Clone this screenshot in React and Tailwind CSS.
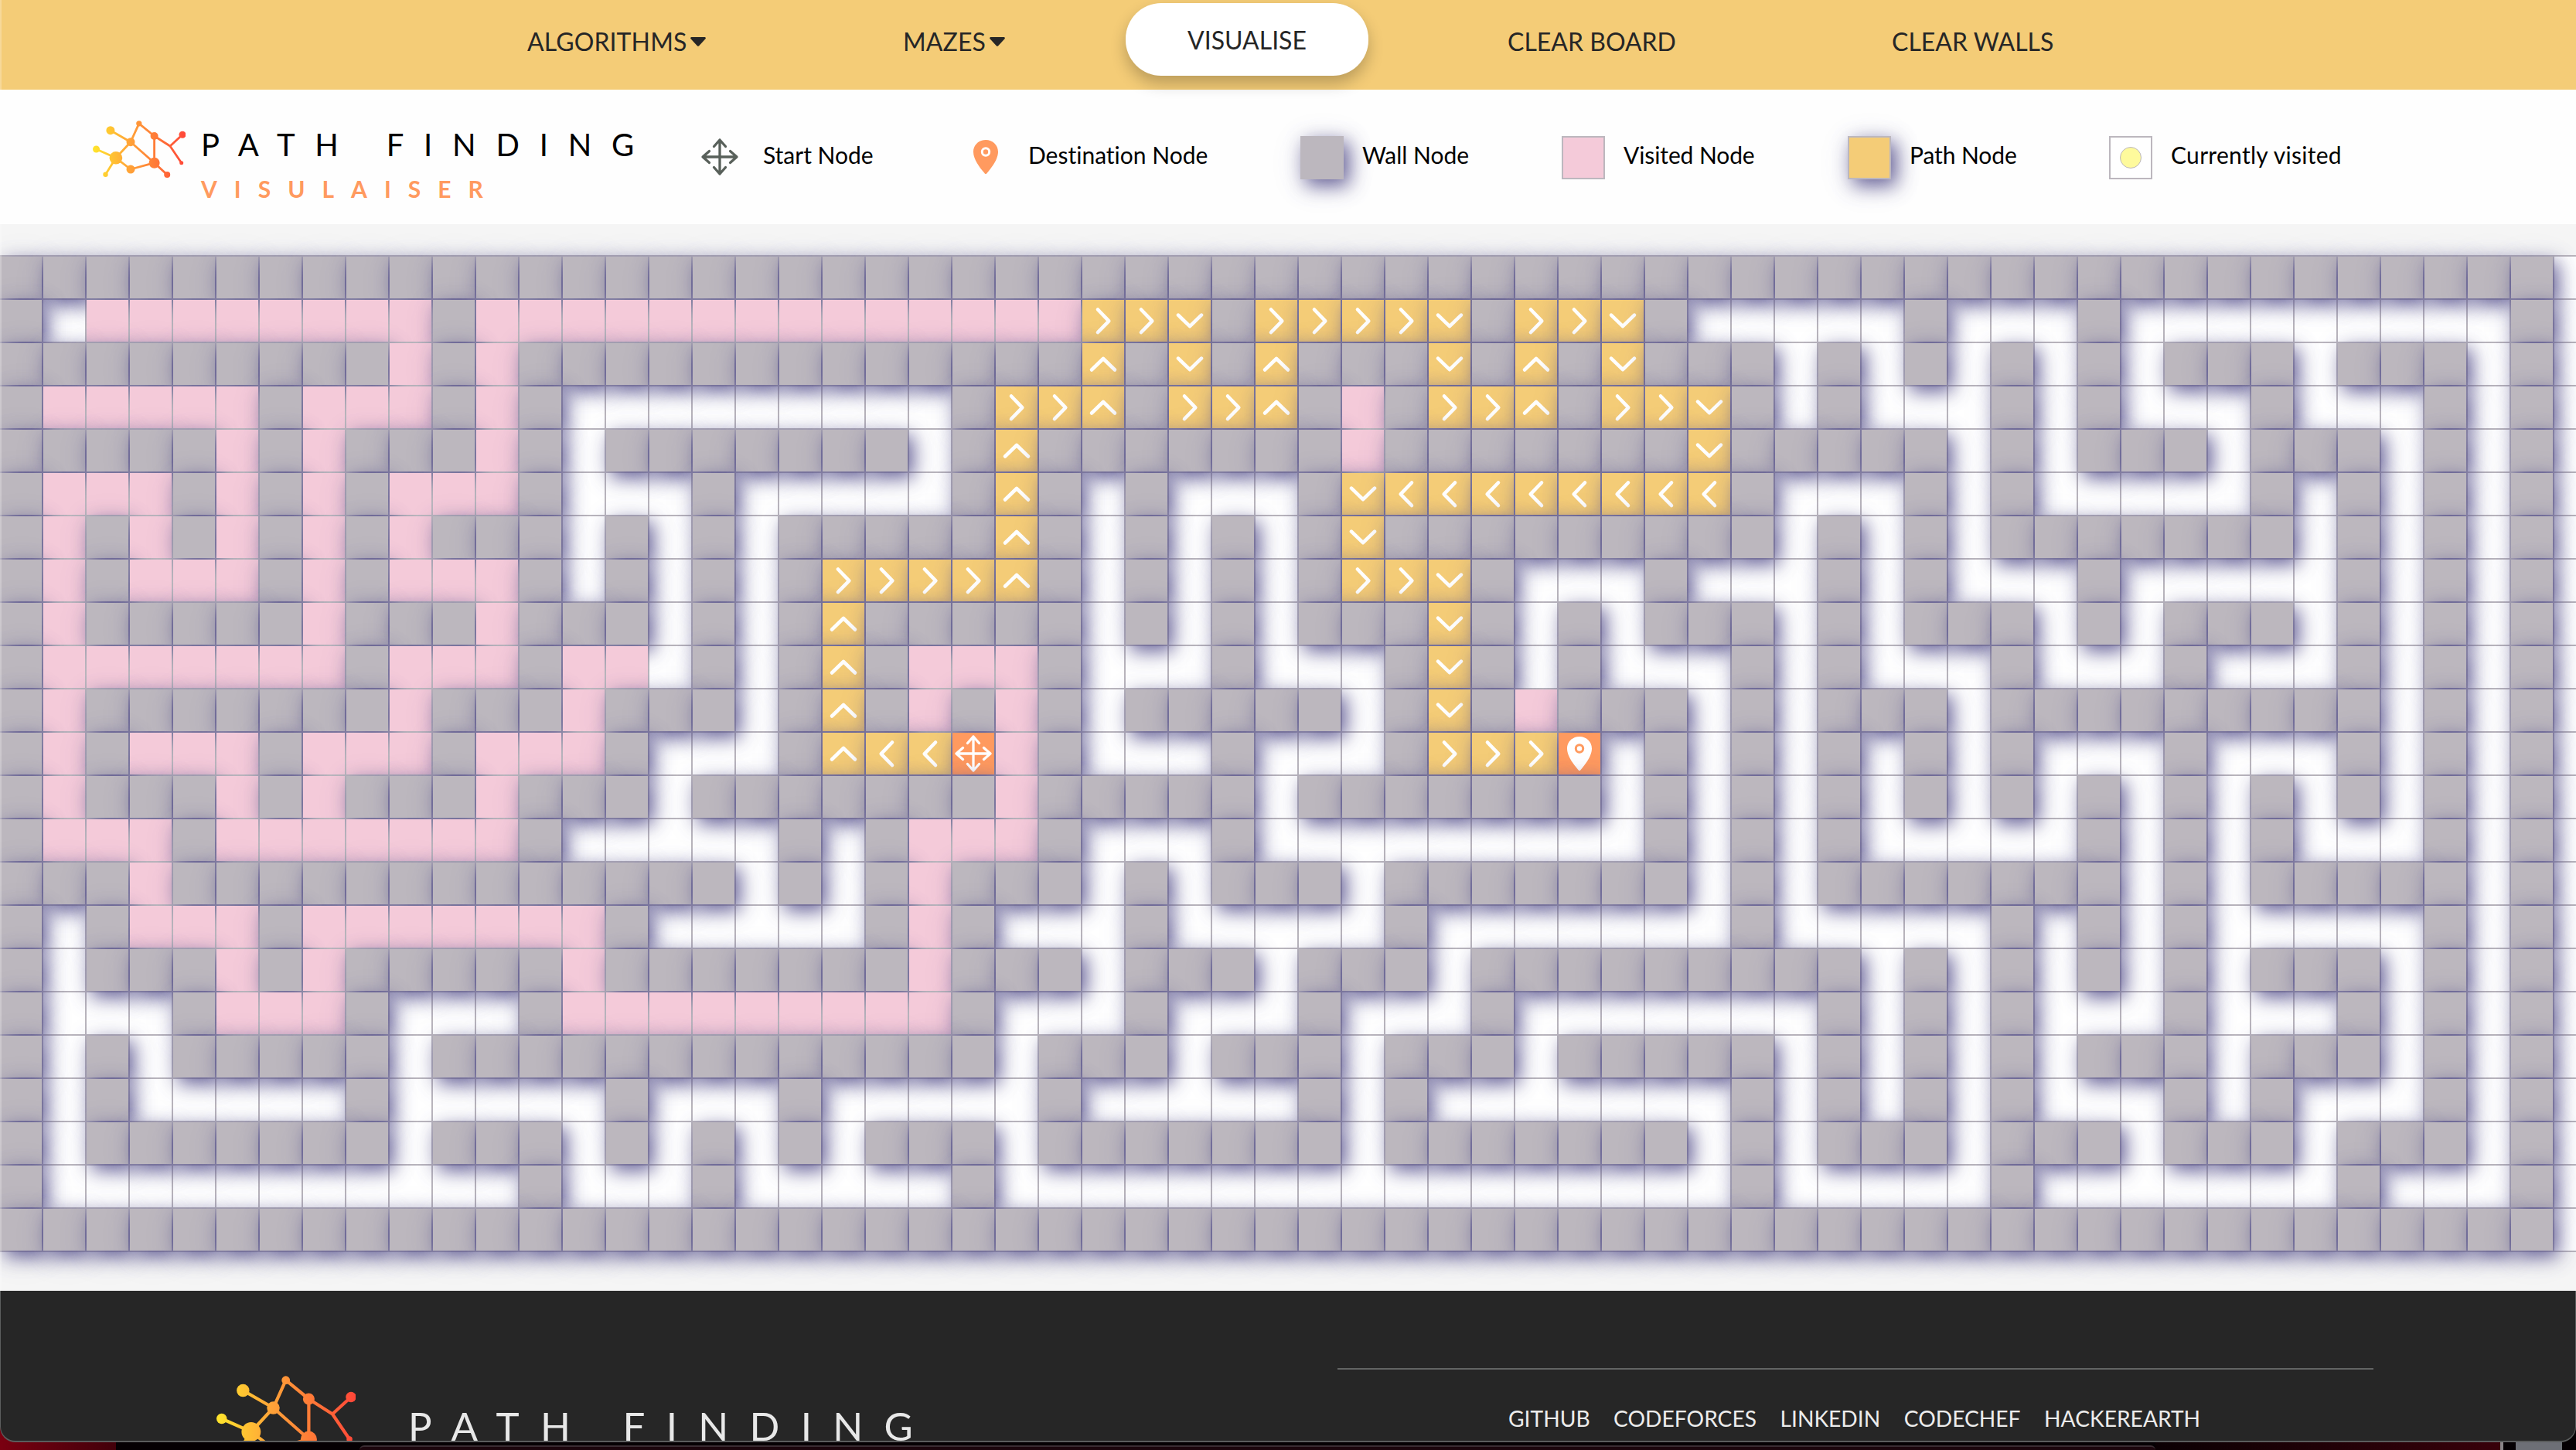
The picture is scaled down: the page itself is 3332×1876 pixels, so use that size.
import React from "react";

const MAZE = [
  "###########################################################",
  "#.oooooooo#oooooooooooooo>>v#>>>>v#>>v#.....#...#.........#",
  "#########o#o#############^#v#^###v#^#v###.#.#.#.#.###.###.#",
  "#ooooo#ooo#o#.........#>>^#>>^#o#>>^#>>v#.#...#.#...#...#.#",
  "#####o#o###o#.#######.#^#######o#######v#####.#.###.###.#.#",
  "#ooo#o#o#ooo#...#.....#^#.#...#v<<<<<<<<#...#.#.....#.#.#.#",
  "#o#o#o#o#o###.#.#.#####^#.#.#.#v#########.#.#.#######.#.#.#",
  "#o#ooo#o#ooo#.#.#.#>>>>^#.#.#.#>>v#...#...#.#...#.....#.#.#",
  "#o#####o###o###.#.#^#####.#.#.###v#.#.###.#.###.#.###.#.#.#",
  "#ooooooo#ooo#oo.#.#^#ooo#...#...#v#.#...#.#...#...#...#.#.#",
  "#o#######o###o###.#^#o#o#.#####.#v#o###.#.###.#########.#.#",
  "#o#ooo#ooo#ooo#...#^<<So#...#...#>>>D.#.#.#.#.#...#...#.#.#",
  "#o###o#o###o###.#######o#####.#######.#.#.#.#.#.#.#.#.#.#.#",
  "#ooo#ooooooo#.....#.#ooo#...#.........#.#.#.....#.#.#...#.#",
  "###o#############.#.#o###.#.###.#######.#.#######.#.#####.#",
  "#.#ooo#ooooooo#.....#o#...#.....#.......#.....#.#.#.....#.#",
  "#.###o#o#####o#######o###.###.###.#########.#.#.#.#.###.#.#",
  "#...#ooo#...#ooooooooo#...#...#...#.......#.#.#...#...#.#.#",
  "#.#.#####.#############.###.###.###.#####.#.#.#.###.###.#.#",
  "#.#.....#.....#...#.....#.....#.#.......#.#.#.#...#.#...#.#",
  "#.#######.###.#.#.#.###.#######.#######.#.###.###.###.###.#",
  "#...........#...#.....#.................#.....#.......#...#",
  "###########################################################",
];

const SHADOW = "shadow-[7px_8px_24px_#5a558fe8,2px_7px_40px_#5a558f26]";

const CHEVRONS = {
  ">": "M20 12.5 34.3 27.3 20 42",
  "<": "M34 12.5 19.7 27.3 34 42",
  "^": "M12 34.5 27 20 42 34.5",
  v: "M12 19.7 27 34.2 42 19.7",
};

function MoveIcon({ className }) {
  return (
    <svg viewBox="0 0 54 54" className={className} fill="none" stroke="currentColor" strokeWidth="3.3" strokeLinecap="round" strokeLinejoin="round">
      <path d="M27 5v44M5 27h44M19.5 13.500 27 5l7.5 8.500M19.5 40.500 27 49l7.5-8.500M13.500 19.5 5 27l8.500 7.5M40.500 19.5 49 27l-8.500 7.5" />
    </svg>
  );
}

function PinIcon({ className, hole }) {
  return (
    <svg viewBox="0 0 54 54" className={className}>
      <path fill="currentColor" d="M27 5c-9 0-16 6.8-16 15.4C11 31.500 22.500 44.500 25.800 48.400a1.600 1.600 0 0 0 2.400 0C31.500 44.500 43 31.500 43 20.400 43 11.800 36 5 27 5Z" />
      <circle cx="27" cy="20.500" r="4.700" fill="none" stroke={hole} strokeWidth="3" />
    </svg>
  );
}

function Cell({ type }) {
  if (type === ".") return <div />;
  if (type === "#") return <div className={`bg-[#bcb7be] ${SHADOW}`} />;
  if (type === "o") return <div className="bg-[#f4cad9]" />;
  if (type === "S")
    return (
      <div className={`bg-[#ff9a5f] text-white ${SHADOW}`}>
        <MoveIcon className="size-[54px]" />
      </div>
    );
  if (type === "D")
    return (
      <div className={`bg-[#ff9a5f] text-white ${SHADOW}`}>
        <PinIcon className="size-[54px]" hole="#ff9a5f" />
      </div>
    );
  return (
    <div className={`bg-[#f4cc77] text-white ${SHADOW}`}>
      <svg viewBox="0 0 54 54" className="size-[54px]" fill="none" stroke="currentColor" strokeWidth="4.6" strokeLinecap="round" strokeLinejoin="round">
        <path d={CHEVRONS[type]} />
      </svg>
    </div>
  );
}

function Logo({ className, id }) {
  const nodes = [
    [59.8, 3.8, 3.6], [22.900, 12.700, 5.500], [49, 27.700, 5.500], [79.600, 20, 5], [116, 18.300, 4.500],
    [114.700, 54.700, 2.500], [4.500, 37, 4.500], [29.900, 48.300, 8.300], [16.500, 69.700, 3.200], [49, 63, 5.500],
    [79.600, 54.700, 7], [96.200, 70, 4],
  ];
  return (
    <svg viewBox="0 0 120 74" className={className}>
      <defs>
        <linearGradient id={id} gradientUnits="userSpaceOnUse" x1="0" y1="0" x2="120" y2="0">
          <stop offset="0" stopColor="#ffe52c" />
          <stop offset="0.4" stopColor="#ffa238" />
          <stop offset="0.660" stopColor="#ff7d37" />
          <stop offset="1" stopColor="#ff4638" />
        </linearGradient>
      </defs>
      <g fill="none" stroke={`url(#${id})`} strokeWidth="2.800">
        <path d="M22.900 12.700 49 27.700M59.800 3.800 49 27.700M59.800 3.800 79.600 20M49 27.700 29.900 48.300M4.500 37 29.900 48.300M29.900 48.300 16.500 69.700M29.900 48.300 49 63M49 63 79.600 54.700M49 27.700 79.600 54.700M79.600 20 79.601 54.700M79.600 20 100 33M100 33 116 18.300M100 33 114.700 54.700M79.600 54.700 96.200 70" />
      </g>
      <g fill={`url(#${id})`}>
        {nodes.map(([x, y, r]) => (
          <circle key={`${x}-${y}`} cx={x} cy={y} r={r} />
        ))}
      </g>
    </svg>
  );
}

function Caret() {
  return (
    <svg viewBox="0 0 22 14" className="ml-[4px] h-[14px] w-[22px]">
      <path d="M2.500 1h17a1.300 1.300 0 0 1 1 2.200l-8.300 9a1.700 1.700 0 0 1-2.400 0l-8.300-9a1.300 1.300 0 0 1 1-2.200Z" fill="#262626" />
    </svg>
  );
}

function NavBar() {
  return (
    <nav className="flex h-[116px] items-center bg-[#f4cc77] pl-[682px] text-[32px] leading-none text-[#262626]">
      <div className="flex w-[486px] items-center pb-[8px] tracking-[0.100px]">ALGORITHMS<Caret /></div>
      <div className="flex w-[288px] items-center pb-[8px] tracking-[0.100px]">MAZES<Caret /></div>
      <button className="mb-[14px] h-[94px] w-[314px] rounded-[46px] bg-white pt-[2px] leading-none shadow-[0_10px_20px_rgba(0,0,0,0.24)]">
        VISUALISE
      </button>
      <div className="ml-[180px] w-[497px] pb-[8px]">CLEAR BOARD</div>
      <div className="pb-[8px]">CLEAR WALLS</div>
    </nav>
  );
}

function Swatch({ className, children }) {
  return <div className={`mt-[2px] flex size-[56px] items-center justify-center border-2 border-[#bcb7be] ${className}`}>{children}</div>;
}

function Legend() {
  return (
    <div className="flex h-[174px] items-start bg-[#fefefe] text-black">
      <div className="flex w-[904px] items-start pt-[40px] pl-[120px]">
        <Logo className="h-[74px] w-[120px] shrink-0" id="logo-top" />
        <div className="ml-[20px] whitespace-nowrap">
          <div className="pt-[11px] text-[40px] leading-[40px] tracking-[25.800px]">PATH FINDING</div>
          <div className="mt-[21px] text-[30px] leading-[32px] font-bold tracking-[22px] text-[#ff9a5f]">VISULAISER</div>
        </div>
      </div>
      <div className="flex items-center pt-[58px] text-[30px] leading-none whitespace-nowrap">
        <div className="flex w-[344px] items-center">
          <MoveIcon className="size-[54px] text-[#58605a]" />
          <span className="ml-[29px] pb-[6px]">Start Node</span>
        </div>
        <div className="flex w-[434px] items-center">
          <PinIcon className="size-[54px] text-[#ff9a5f]" hole="#fff" />
          <span className="ml-[28px] pb-[6px] [font-variant-ligatures:none]">Destination Node</span>
        </div>
        <div className="flex w-[338px] items-center">
          <Swatch className={`bg-[#bcb7be] ${SHADOW}`} />
          <span className="ml-[24px] pb-[6px]">Wall Node</span>
        </div>
        <div className="flex w-[370px] items-center">
          <Swatch className="bg-[#f4cad9]" />
          <span className="ml-[24px] pb-[6px] tracking-[-0.100px]">Visited Node</span>
        </div>
        <div className="flex w-[338px] items-center">
          <Swatch className={`bg-[#f4cc77] ${SHADOW}`} />
          <span className="ml-[24px] pb-[6px] tracking-[-0.100px]">Path Node</span>
        </div>
        <div className="flex items-center">
          <Swatch className="bg-white">
            <div className="mb-[1px] size-[28px] rounded-full border border-[#bcb7be] bg-[#fefa9c]" />
          </Swatch>
          <span className="ml-[24px] pb-[6px] tracking-[0.300px]">Currently visited</span>
        </div>
      </div>
    </div>
  );
}

function Board() {
  return (
    <div className="bg-[#f5f5f5] pt-[40px] pb-[50px]">
      <div className="grid w-[3332px] grid-cols-[repeat(59,54px)] grid-rows-[repeat(23,54px)] gap-[2px] bg-white bg-[repeating-linear-gradient(90deg,transparent_0_54px,#bab6bd_54px_56px),repeating-linear-gradient(180deg,#bab6bd_0_2px,transparent_2px_56px)] py-[2px]">
        {MAZE.flatMap((row, r) => row.split("").map((type, c) => <Cell key={`${r}-${c}`} type={type} />))}
      </div>
    </div>
  );
}

const LINKS = ["GITHUB", "CODEFORCES", "LINKEDIN", "CODECHEF", "HACKEREARTH"];

function Footer() {
  return (
    <footer className="relative z-10 flex h-[196px] items-start rounded-b-[20px] border-x border-b-2 border-[#5b5d5d] bg-[#262626]">
      <div className="flex w-[1729px] items-start pt-[110px] pl-[279px] text-[#e8e8e8]">
        <div className="h-[84px] w-[180px] shrink-0 overflow-hidden">
          <Logo className="h-[111px] w-[180px]" id="logo-bottom" />
        </div>
        <div className="ml-[68px] pt-[45px] text-[51px] leading-[40px] tracking-[27.300px] whitespace-nowrap">PATH FINDING</div>
      </div>
      <div className="w-[1340px] pt-[100px]">
        <div className="h-[2px] bg-[#626463]" />
        <div className="flex gap-[30.500px] pt-[48px] pl-[221px] text-[28.200px] leading-[30px] text-[#ececec]">
          {LINKS.map((name) => (
            <span key={name}>{name}</span>
          ))}
        </div>
      </div>
    </footer>
  );
}

function Desktop() {
  return (
    <div className="-mt-[20px] flex h-[30px] items-end bg-[#050003]">
      <div className="h-[30px] w-[150px] bg-gradient-to-r from-[#7a0010] to-[#42000a]" />
      <div className="ml-[315px] h-[6px] w-[2323px] rounded-t-[20px] border-t-2 border-[#3a2c32] bg-[#1c060d]" />
      <div className="h-[10px] w-[446px] bg-gradient-to-r from-[#0b0003] to-[#38000a]" />
      <div className="h-[10px] w-[4px] bg-[#8a8588]" />
      <div className="ml-[16px] h-[10px] w-[60px] bg-[#6d6f76]" />
    </div>
  );
}

export default function App() {
  return (
    <div className="relative h-[1876px] w-[3332px] overflow-hidden bg-white font-['Lato',sans-serif]">
      <NavBar />
      <Legend />
      <Board />
      <Footer />
      <Desktop />
      <div className="absolute top-0 left-0 h-[1670px] w-[2px] bg-white/25" />
    </div>
  );
}
